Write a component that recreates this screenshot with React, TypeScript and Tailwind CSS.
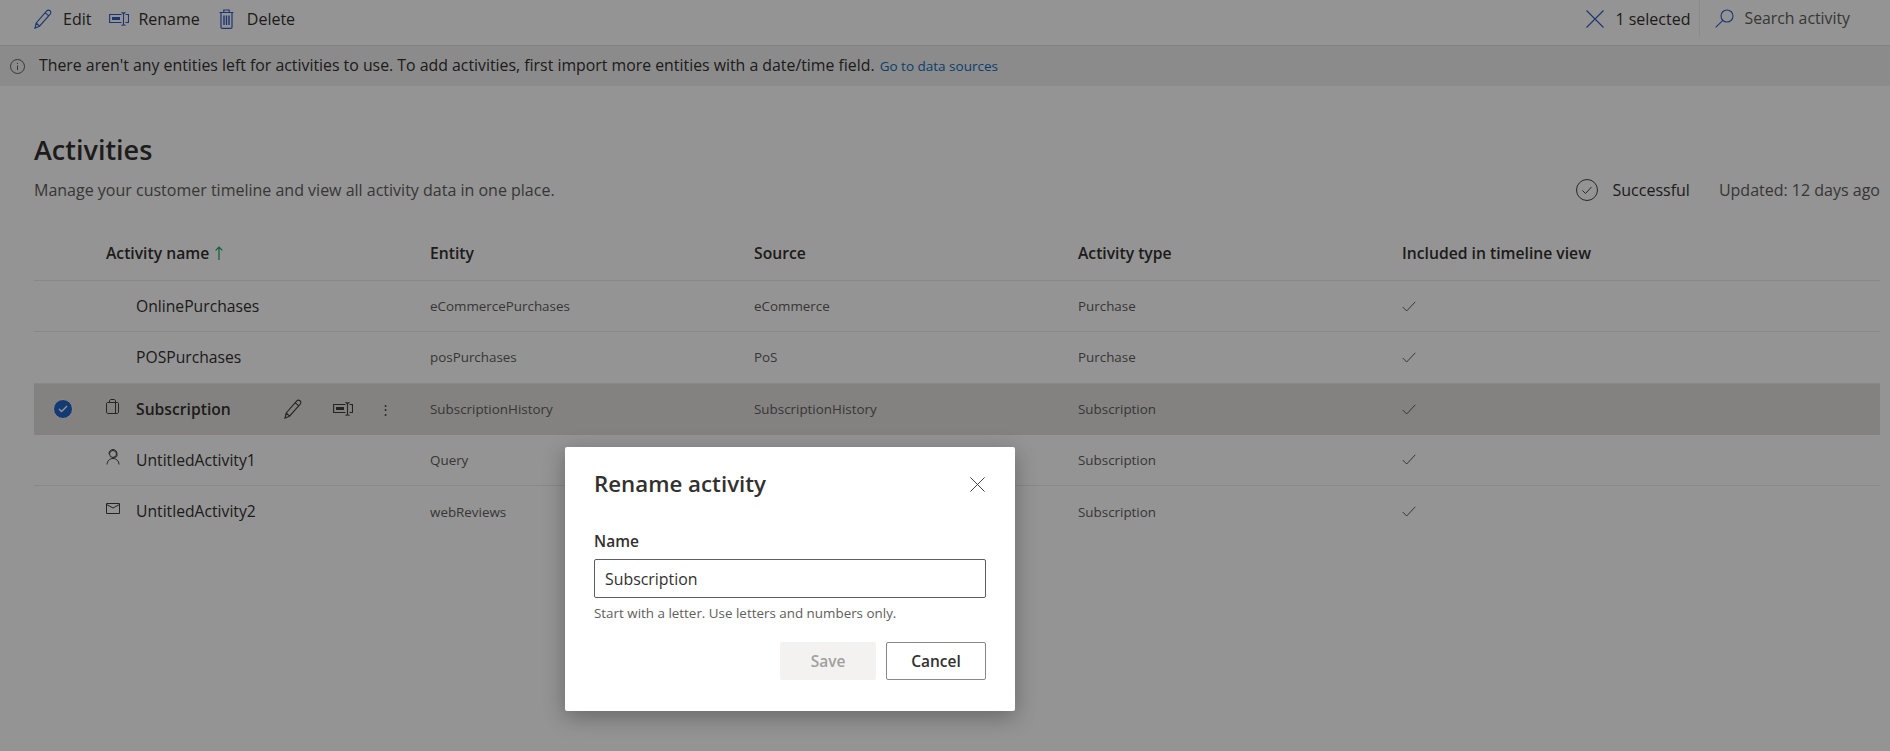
import React from 'react';

const font = { fontFamily: '"Open Sans", "Noto Sans", sans-serif' };

function PencilIcon({ className }: { className?: string }) {
    return (
        <svg className={className} viewBox="0 0 18 20" fill="none" stroke="currentColor" strokeWidth={1.1}>
            <path d="M1 19l1.200-5L12.600 2.200c1-1.100 2.400-1.200 3.400-.4s1.100 2.200.2 3.300L5.500 17.200z M2.200 14l3.300 3.200 M11.300 3.800l3.500 3" />
        </svg>
    );
}

function RenameIcon({ className }: { className?: string }) {
    return (
        <svg className={className} viewBox="0 0 20 14" fill="none" stroke="currentColor" strokeWidth={1.1}>
            <path d="M12.500 2.500H.6v8h11.900 M14.500 1v12 M12.500.6c1 0 1.700.2 2 .8.300-.6 1-.8 2-.8 M12.500 13.400c1 0 1.700-.2 2-.8.300.6 1 .8 2 .8 M16.500 2.500h3v8h-3" />
            <rect x="3" y="5" width="8" height="3" fill="currentColor" stroke="none" />
        </svg>
    );
}

function TrashIcon({ className }: { className?: string }) {
    return (
        <svg className={className} viewBox="0 0 15 20" fill="none" stroke="currentColor" strokeWidth={1.2}>
            <path d="M.5 3.500h14 M4.800 3.500V1h5.400v2.500 M2 3.500v14.700c0 .7.500 1.200 1.200 1.200h8.600c.7 0 1.200-.5 1.200-1.200V3.500" />
            <path d="M5 6.500v9.500 M7.500 6.500v9.500 M10 6.500v9.500" strokeWidth={1.4} />
        </svg>
    );
}

function CloseIcon({ className }: { className?: string }) {
    return (
        <svg className={className} viewBox="0 0 18 18" fill="none" stroke="currentColor" strokeWidth={1.1}>
            <path d="M.5.5l17 17 M17.500.5l-17 17" />
        </svg>
    );
}

function SearchIcon({ className }: { className?: string }) {
    return (
        <svg className={className} viewBox="0 0 19 19" fill="none" stroke="currentColor" strokeWidth={1.1}>
            <circle cx="12" cy="7" r="6" />
            <path d="M7.800 11.300L.7 18.400" />
        </svg>
    );
}

function SmallCheck() {
    return (
        <svg className="h-[11px] w-[14px] text-[#5f5e5c]" viewBox="0 0 14 11" fill="none" stroke="currentColor" strokeWidth={1}>
            <path d="M.7 6l4 4L13.300.8" />
        </svg>
    );
}

function BagIcon() {
    return (
        <svg className="h-[15px] w-[13px] text-[#3f3e3d]" viewBox="0 0 13 15" fill="none" stroke="currentColor" strokeWidth={1}>
            <path d="M.5 4.500c0-.6.400-1 1-1h10c.6 0 1 .4 1 1v8.500c0 .8-.7 1.500-1.500 1.500H2c-.8 0-1.500-.7-1.500-1.500z M9.500 3.500v11 M3.500 3.500V2c0-.8.700-1.500 1.500-1.500h3c.8 0 1.500.7 1.500 1.500v1.500" />
        </svg>
    );
}

function PersonIcon() {
    return (
        <svg className="h-[16px] w-[14px] text-[#3f3e3d]" viewBox="0 0 14 16" fill="none" stroke="currentColor" strokeWidth={1}>
            <circle cx="7" cy="5" r="3.500" />
            <path d="M1 15.500c.2-3.500 2.600-6 6-6s5.800 2.500 6 6 M3 5c0-2.800 1.800-4.500 4-4.500S11 2.200 11 5 M11 5v1.500c0 1-.8 1.700-2 1.700H7.500" />
        </svg>
    );
}

function MailIcon() {
    return (
        <svg className="h-[11px] w-[14px] text-[#3f3e3d]" viewBox="0 0 14 11" fill="none" stroke="currentColor" strokeWidth={1}>
            <path d="M.5.5h13v10H.5z M.5 1.500l6.500 3.500 6.500-3.500" />
        </svg>
    );
}

interface Activity {
    name: string;
    entity: string;
    source: string;
    type: string;
    icon?: React.ReactNode;
    selected?: boolean;
}

const activities: Activity[] = [
    { name: 'OnlinePurchases', entity: 'eCommercePurchases', source: 'eCommerce', type: 'Purchase' },
    { name: 'POSPurchases', entity: 'posPurchases', source: 'PoS', type: 'Purchase' },
    { name: 'Subscription', entity: 'SubscriptionHistory', source: 'SubscriptionHistory', type: 'Subscription', icon: <BagIcon />, selected: true },
    { name: 'UntitledActivity1', entity: 'Query', source: '', type: 'Subscription', icon: <PersonIcon /> },
    { name: 'UntitledActivity2', entity: 'webReviews', source: '', type: 'Subscription', icon: <MailIcon /> },
];

function Row({ item, last }: { item: Activity; last: boolean }) {
    return (
        <div className={`flex h-[51.25px] items-center ${item.selected ? 'bg-[#e3e1de]' : ''} ${last || item.selected ? '' : 'border-b border-[#edebe9]'}`}>
            <div className="flex w-[72px] justify-start pl-[19px]">
                {item.selected && (
                    <span className="flex h-[20px] w-[20px] items-center justify-center rounded-full border border-[#f0f0f0] bg-[#2364c8]">
                        <svg className="h-[8px] w-[10px] text-white" viewBox="0 0 10 8" fill="none" stroke="currentColor" strokeWidth={1.4}>
                            <path d="M1 4l2.600 2.600L9 1" />
                        </svg>
                    </span>
                )}
            </div>
            <div className="flex w-[324px] items-center">
                <div className="flex w-[30px] -translate-y-[3px] items-center">{item.icon}</div>
                <span className={`w-[123px] pt-[1px] text-[15.7px] text-[#323130] ${item.selected ? 'font-semibold' : ''}`}>{item.name}</span>
                {item.selected && (
                    <div className="flex items-center text-[#3f3e3d]">
                        <PencilIcon className="ml-[25px] h-[20px] w-[18px]" />
                        <RenameIcon className="ml-[31px] h-[14px] w-[20px]" />
                        <span className="ml-[26px] text-[13px] leading-none tracking-tighter">⋮</span>
                    </div>
                )}
            </div>
            <div className="w-[324px] text-[13.4px] text-[#605e5c]">{item.entity}</div>
            <div className="w-[324px] text-[13.4px] text-[#605e5c]">{item.source}</div>
            <div className="w-[324px] text-[13.4px] text-[#605e5c]">{item.type}</div>
            <SmallCheck />
        </div>
    );
}

export default function App() {
    return (
        <div className="relative h-[751px] w-[1890px] overflow-hidden bg-white" style={font}>
            <div className="flex h-[46px] items-center justify-between border-b border-[#e1dfdd] pb-[8px] pl-[34px] pr-[40px] text-[16px] text-[#323130]">
                <div className="flex items-center">
                    <PencilIcon className="h-[20px] w-[18px] text-[#2f5ec4]" />
                    <span className="ml-[11px]">Edit</span>
                    <RenameIcon className="ml-[18px] h-[14px] w-[20px] text-[#2f5ec4]" />
                    <span className="ml-[9px]">Rename</span>
                    <TrashIcon className="ml-[19px] h-[20px] w-[15px] text-[#2f5ec4]" />
                    <span className="ml-[13px]">Delete</span>
                </div>
                <div className="flex h-full items-center">
                    <CloseIcon className="h-[18px] w-[18px] text-[#2f5ec4]" />
                    <span className="ml-[11px]">1 selected</span>
                    <div className="ml-[9px] h-full border-l border-[#eeeeee]" />
                    <SearchIcon className="ml-[15px] h-[19px] w-[19px] text-[#2f5ec4]" />
                    <span className="ml-[10px] text-[15.8px] text-[#605e5c]">Search activity</span>
                </div>
            </div>

            <div className="flex h-[40px] items-center bg-[#f0f0f0] pl-[10px] text-[15.85px] text-[#323130]">
                <svg className="h-[15px] w-[15px] text-[#605e5c]" viewBox="0 0 15 15" fill="none" stroke="currentColor" strokeWidth={1}>
                    <circle cx="7.500" cy="7.500" r="7" />
                    <path d="M7.500 6.500v4.500 M7.500 4v1" />
                </svg>
                <span className="ml-[14px]">There aren't any entities left for activities to use. To add activities, first import more entities with a date/time field.</span>
                <span className="ml-[5px] text-[13.5px] text-[#0f6cbd]">Go to data sources</span>
            </div>

            <div className="pl-[34px] pr-[10px]">
                <h1 className="mt-[46px] text-[27px] leading-[36px] font-semibold text-[#323130]">Activities</h1>
                <div className="mt-[10px] flex items-center justify-between">
                    <p className="text-[16px] text-[#605e5c]">Manage your customer timeline and view all activity data in one place.</p>
                    <div className="flex items-center text-[16px] text-[#605e5c]">
                        <svg className="h-[22px] w-[22px] text-[#484644]" viewBox="0 0 22 22" fill="none" stroke="currentColor" strokeWidth={1}>
                            <circle cx="11" cy="11" r="10.500" />
                            <path d="M6.500 11.500l3 3 6-6.500" />
                        </svg>
                        <span className="ml-[15px] text-[#323130]">Successful</span>
                        <span className="ml-[29px]">Updated: 12 days ago</span>
                    </div>
                </div>

                <div className="mt-[23px]">
                    <div className="flex h-[56px] items-center border-b border-[#edebe9] pt-[2px] text-[15.7px] font-semibold text-[#323130]">
                        <div className="flex w-[396px] items-center pl-[72px]">
                            Activity name
                            <svg className="ml-[6px] h-[14px] w-[8px] text-[#1f9d68]" viewBox="0 0 8 14" fill="none" stroke="currentColor" strokeWidth={1.2}>
                                <path d="M4 14V1 M.7 4.300L4 1l3.300 3.300" />
                            </svg>
                        </div>
                        <div className="w-[324px]">Entity</div>
                        <div className="w-[324px]">Source</div>
                        <div className="w-[324px]">Activity type</div>
                        <div>Included in timeline view</div>
                    </div>
                    {activities.map((item, index) => (
                        <Row key={item.name} item={item} last={index === activities.length - 1} />
                    ))}
                </div>
            </div>

            <div className="absolute inset-0 bg-black/[0.42]" />

            <div className="absolute top-[447px] left-[565px] h-[264px] w-[450px] rounded-[2px] bg-white px-[29px] pt-[18px] shadow-[0_6px_22px_rgba(0,0,0,0.3)]">
                <div className="flex items-center justify-between">
                    <h2 className="text-[22.3px] leading-[38px] font-semibold text-[#323130]">Rename activity</h2>
                    <CloseIcon className="mr-[1px] h-[15px] w-[15px] text-[#323130]" />
                </div>
                <label className="mt-[27px] block text-[15.5px] leading-[22px] font-semibold text-[#323130]">Name</label>
                <div className="mt-[7px] flex h-[39px] items-center rounded-[2px] border border-[#605e5c] px-[10px] pt-[2px] text-[15.9px] text-[#323130]">Subscription</div>
                <p className="mt-[5px] text-[13.4px] text-[#605e5c]">Start with a letter. Use letters and numbers only.</p>
                <div className="mt-[19px] flex justify-end gap-[10px]">
                    <button className="h-[38px] w-[96px] rounded-[2px] bg-[#f3f2f1] pt-[2px] text-[15.5px] font-semibold text-[#a19f9d]">Save</button>
                    <button className="h-[38px] w-[100px] rounded-[2px] border border-[#8a8886] bg-white pt-[2px] text-[15.5px] font-semibold text-[#323130]">Cancel</button>
                </div>
            </div>
        </div>
    );
}
